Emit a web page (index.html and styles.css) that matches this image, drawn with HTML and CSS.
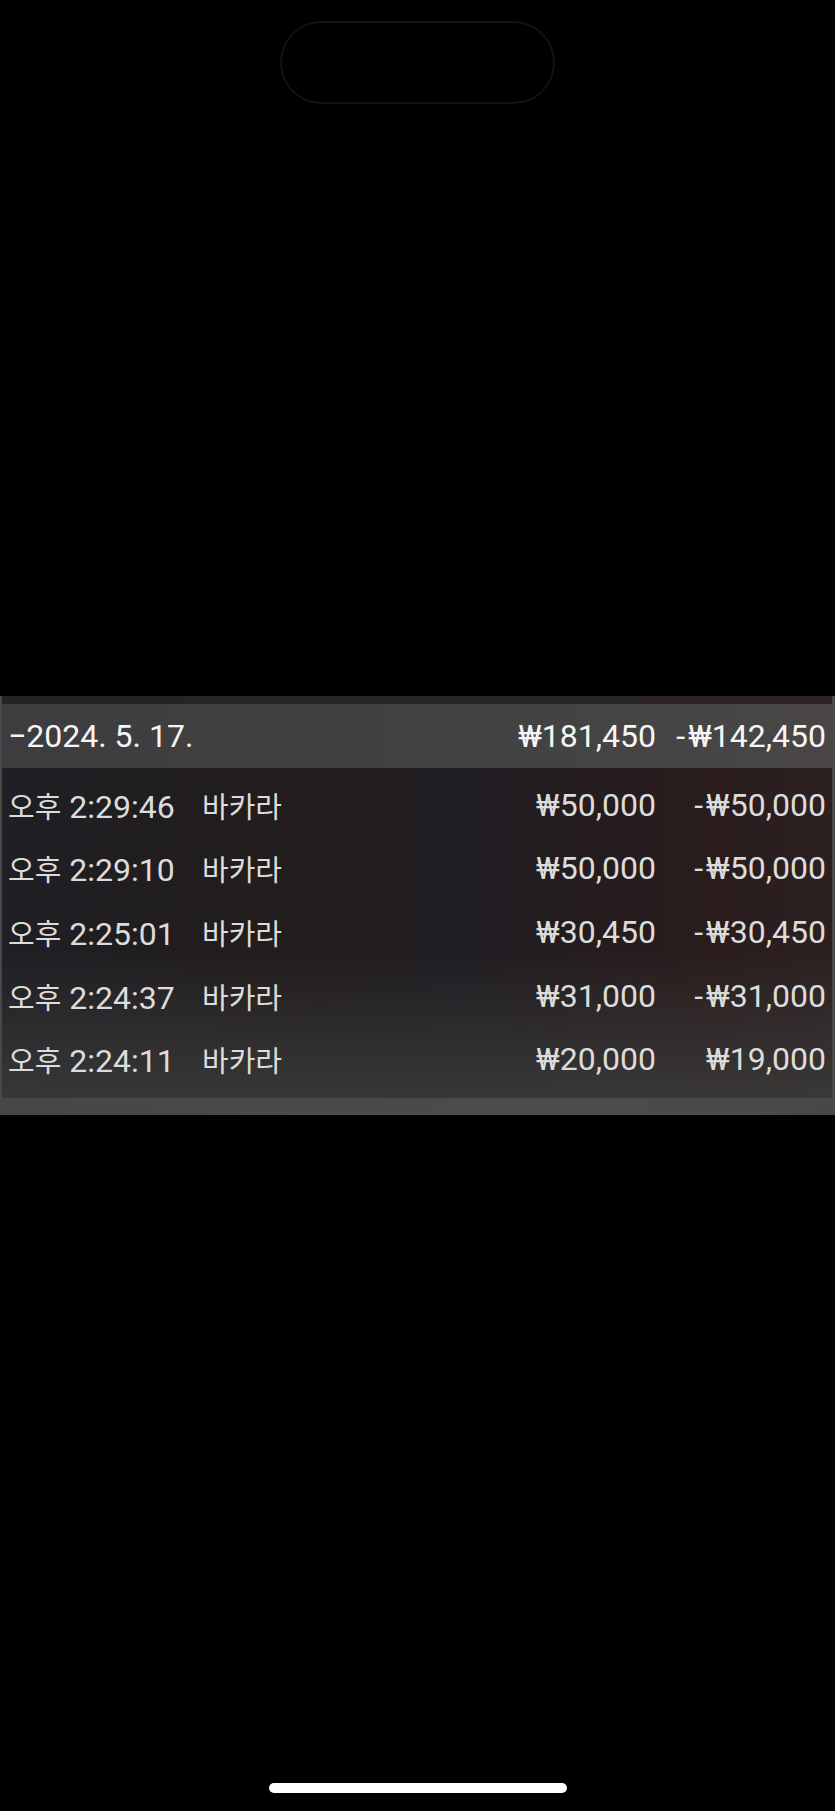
FILE: index.html
```html
<!DOCTYPE html>
<html lang="ko">
<head>
<meta charset="utf-8">
<link rel="stylesheet" href="styles.css">
</head>
<body>
<div class="phone">
  <div class="island"></div>
  <section class="ledger">
    <div class="topstrip"></div>
    <div class="row head">
      <div class="date">−2024. 5. 17.</div>
      <div class="amt">₩181,450</div>
      <div class="net"><span class="minus">-</span>₩142,450</div>
    </div>
    <div class="body">
      <div class="row">
        <div class="time"><span class="ko">오후</span> 2:29:46</div><div class="game ko">바카라</div>
        <div class="amt">₩50,000</div><div class="net"><span class="minus">-</span>₩50,000</div>
      </div>
      <div class="row">
        <div class="time"><span class="ko">오후</span> 2:29:10</div><div class="game ko">바카라</div>
        <div class="amt">₩50,000</div><div class="net"><span class="minus">-</span>₩50,000</div>
      </div>
      <div class="row">
        <div class="time"><span class="ko">오후</span> 2:25:01</div><div class="game ko">바카라</div>
        <div class="amt">₩30,450</div><div class="net"><span class="minus">-</span>₩30,450</div>
      </div>
      <div class="row">
        <div class="time"><span class="ko">오후</span> 2:24:37</div><div class="game ko">바카라</div>
        <div class="amt">₩31,000</div><div class="net"><span class="minus">-</span>₩31,000</div>
      </div>
      <div class="row">
        <div class="time"><span class="ko">오후</span> 2:24:11</div><div class="game ko">바카라</div>
        <div class="amt">₩20,000</div><div class="net">₩19,000</div>
      </div>
    </div>
    <div class="bottomstrip"></div>
  </section>
  <div class="home"></div>
</div>
</body>
</html>
```
FILE: styles.css
```css
html, body {
  margin: 0;
  padding: 0;
  background: #000;
}
.phone {
  width: 835px;
  height: 1811px;
  display: flex;
  flex-direction: column;
  align-items: center;
  overflow: hidden;
  font-family: Roboto, "Noto Sans CJK KR", sans-serif;
}
.island {
  margin-top: 21px;
  width: 275px;
  height: 83px;
  box-sizing: border-box;
  border: 2px solid #131313;
  border-radius: 42px;
}
.ledger {
  margin-top: 592px;
  width: 835px;
  box-sizing: border-box;
  border-left: 2px solid #4d4646;
  border-right: 3px solid #4d4646;
  display: flex;
  flex-direction: column;
}
.topstrip {
  height: 8px;
  background: linear-gradient(90deg, #232326, #282725 50%, #2a2322);
}
.bottomstrip {
  height: 17px;
  background: linear-gradient(90deg, #474747, #4c4c4c 70%, #4a4747);
}
.row {
  display: grid;
  grid-template-columns: 194px 1fr auto 170px;
  align-items: center;
  height: 64px;
  padding-left: 6px;
  padding-right: 6px;
  font-size: 32px;
  color: #dcdcdc;
  white-space: nowrap;
}
.head {
  background: linear-gradient(90deg, #3d3d3f, #424243 55%, #4a4646);
  color: #f6f6f6;
}
.date {
  grid-column: 1 / 3;
}
.body {
  padding: 5px 0 7px;
  background:
    linear-gradient(180deg, rgba(0,0,0,0) 55%, rgba(60,60,60,0.85) 100%),
    linear-gradient(90deg, #1f1f24 0%, #221c1d 35%, #1f1d22 55%, #2a1c1c 85%, #2c2020 100%);
}
.body .row {
  height: 63.6px;
}
.ko {
  font-size: 29px;
}
.minus {
  margin-right: 3px;
}
.amt, .net {
  text-align: right;
}
.home {
  margin-top: 668px;
  width: 298px;
  height: 10px;
  border-radius: 5px;
  background: #fff;
}
```
